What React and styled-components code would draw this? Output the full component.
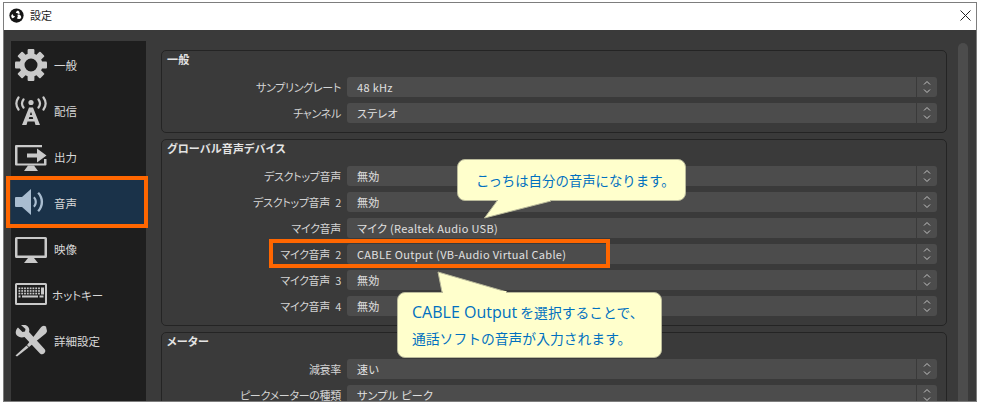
import React from 'react'
import styled, { createGlobalStyle } from 'styled-components'

const Global = createGlobalStyle`
  html, body { margin: 0; padding: 0; background: #fff; }
  body { font-family: "Noto Sans CJK JP", "Liberation Sans", sans-serif; overflow: hidden; }
`

const Page = styled.div`
  position: relative;
  width: 981px;
  height: 406px;
  padding: 2px 4px 4px 3px;
  box-sizing: border-box;
`

const Win = styled.div`
  height: 100%;
  border: 1px solid #7d7d7d;
  display: flex;
  flex-direction: column;
  overflow: hidden;
  box-sizing: border-box;
`

const TitleBar = styled.div`
  height: 27px;
  flex-shrink: 0;
  background: #fff;
  display: flex;
  align-items: center;
  padding: 0 5px 3px 5px;
  gap: 6px;
  box-sizing: border-box;
`

const TitleText = styled.div`
  font-size: 11px;
  color: #222;
  flex: 1;
`

const Body = styled.div`
  flex: 1;
  min-height: 0;
  background: #3a3a3a;
  display: flex;
  padding: 11px 8px 0 7px;
  overflow: hidden;
`

const Side = styled.div`
  width: 135px;
  flex-shrink: 0;
  background: #1e1e1e;
  padding-top: 1px;
`

const NavItem = styled.div`
  height: 46px;
  display: flex;
  align-items: center;
  gap: ${({ $tight }) => ($tight ? '5px' : '7px')};
  padding-left: 4px;
  background: ${({ $active }) => ($active ? '#1a3249' : 'transparent')};
  color: #d8d8d8;
  font-size: 11.5px;
  font-feature-settings: "palt";
`

const Content = styled.div`
  width: 786px;
  margin-left: 15px;
  flex-shrink: 0;
  padding-top: 9px;
  display: flex;
  flex-direction: column;
  gap: 6px;
`

const Scroll = styled.div`
  width: 10px;
  margin: 2px 0 0 11px;
  background: #4c4c4c;
  border-radius: 5px 5px 0 0;
  flex-shrink: 0;
`

const Group = styled.div`
  position: relative;
  border: 1px solid #242424;
  border-radius: 5px;
  padding: 26px 9px 9px 0;
  display: flex;
  flex-direction: column;
  gap: 6px;
  flex-shrink: 0;
`

const GroupTitle = styled.div`
  position: absolute;
  top: 0;
  left: 5px;
  font-size: 11px;
  line-height: 16px;
  font-weight: 700;
  letter-spacing: 0.2px;
  color: #e4e4e4;
  font-feature-settings: "palt";
`

const Row = styled.div`
  display: grid;
  grid-template-columns: 179px 1fr;
  column-gap: 6px;
  height: 20px;
  align-items: center;
`

const Label = styled.div`
  text-align: right;
  font-size: 11px;
  letter-spacing: -0.3px;
  word-spacing: 3px;
  color: #d4d4d4;
  white-space: nowrap;
  font-feature-settings: "palt";
`

const Combo = styled.div`
  height: 20px;
  background: #4c4c4c;
  border-radius: 3px;
  display: flex;
  align-items: center;
  color: #e0e0e0;
  font-size: 11px;
  letter-spacing: 0.32px;
  padding-left: 10px;
  font-feature-settings: "palt";
`

const ComboText = styled.div`
  flex: 1;
  white-space: nowrap;
`

const Spin = styled.div`
  width: 20px;
  height: 20px;
  border-left: 1px solid #3a3a3a;
  display: flex;
  align-items: center;
  justify-content: center;
`

const Highlight = styled.div`
  position: absolute;
  left: ${({ $x }) => $x}px;
  top: ${({ $y }) => $y}px;
  width: ${({ $w }) => $w}px;
  height: ${({ $h }) => $h}px;
  border: 4px solid #ff6600;
  box-sizing: border-box;
`

const Callout = styled.div`
  position: absolute;
  left: ${({ $x }) => $x}px;
  top: ${({ $y }) => $y}px;
  width: ${({ $w }) => $w}px;
  height: ${({ $h }) => $h}px;
  box-sizing: border-box;
  background: #ffffcc;
  border: 1px solid #b9b99a;
  border-radius: 8px;
  color: #0070c0;
  font-size: ${({ $size }) => $size}px;
  line-height: 26px;
  padding: ${({ $pad }) => $pad};
  white-space: nowrap;
`

const Latin = styled.span`
  font-family: "Open Sans", "Liberation Sans", sans-serif;
  font-size: 16px;
`

const Tail = styled.svg`
  position: absolute;
  left: ${({ $x }) => $x}px;
  top: ${({ $y }) => $y}px;
  overflow: visible;
`

const Ico = styled.svg`
  width: 32px;
  height: 32px;
  flex-shrink: 0;
  fill: ${({ $fill }) => $fill || '#c9c9c9'};
`

const ObsLogo = () => (
  <svg width="15" height="15" viewBox="0 0 16 16">
    <circle cx="8" cy="8" r="7.6" fill="#151515" />
    <path d="M9.5 2.6a3 3 0 0 1 1.4 4.3 3.4 3.4 0 0 0-3.6-1.5A3 3 0 0 1 9.5 2.6z" fill="#fff" />
    <path d="M13 10.3a3 3 0 0 1-4.6.6 3.4 3.4 0 0 0 .6-3.8 3 3 0 0 1 4 3.2z" fill="#fff" />
    <path d="M3.6 10.8a3 3 0 0 1 .1-4.5 3.4 3.4 0 0 0 2.8 2.6 3 3 0 0 1-2.9 1.9z" fill="#fff" />
  </svg>
)

const GearIcon = () => {
  const teeth = [0, 45, 90, 135, 180, 225, 270, 315]
  return (
    <Ico viewBox="0 0 32 32">
      {teeth.map((a) => (
        <rect key={a} x="12.6" y="0" width="6.8" height="8" rx="1" transform={`rotate(${a} 16 16)`} />
      ))}
      <path fillRule="evenodd" d="M16 4.5a11.5 11.5 0 1 1 0 23 11.5 11.5 0 0 1 0-23zm0 5a6.500 6.500 0 1 0 0 13 6.500 6.500 0 0 0 0-13z" />
    </Ico>
  )
}

const AntennaIcon = () => (
  <Ico viewBox="0 0 32 32">
    <circle cx="16" cy="7.500" r="2.6" />
    <path d="M3.500 2.500Q-.8 8.500 3.500 14.500M8.500 4.500Q5.500 8.500 8.500 12.500M28.500 2.500Q32.800 8.500 28.500 14.500M23.500 4.500Q26.500 8.500 23.500 12.500" fill="none" stroke="#c9c9c9" strokeWidth="2.200" strokeLinecap="round" />
    <path fillRule="evenodd" d="M14 12.500h4L25 30h-4.500l-1-3.500h-7l-1 3.500H7zm1 7.500h2l-.5-2.500h-1zm-1.200 4h4.400l-.5-2h-3.400z" />
  </Ico>
)

const OutputIcon = () => (
  <Ico viewBox="0 0 32 32">
    <path d="M1 4h26v2.200H2.500V22.500H29V18h2.500v5.500a1 1 0 0 1-1 1H1a1 1 0 0 1-1-1V5a1 1 0 0 1 1-1z" />
    <path d="M9 30l4-5.500h6l4 5.500z" />
    <path d="M12 12.500h10V7.500l9.500 7-9.500 7v-5H12z" />
  </Ico>
)

const SpeakerIcon = () => (
  <Ico viewBox="0 0 32 32" $fill="#a9bdd0">
    <path d="M1 10h6l9-8v26l-9-8H1a1 1 0 0 1-1-1v-8a1 1 0 0 1 1-1z" />
    <path d="M19.500 9.500c3.200 3 3.200 8 0 11l-1.300-1.600c2-2.200 2-5.600 0-7.800zM24 5c5.500 5.500 5.500 14.500 0 20l-1.700-1.500c4.500-4.500 4.500-12.500 0-17z" />
  </Ico>
)

const MonitorIcon = () => (
  <Ico viewBox="0 0 32 32">
    <path fillRule="evenodd" d="M1.500 4h29A1.500 1.500 0 0 1 32 5.500v18a1.500 1.500 0 0 1-1.500 1.500h-29A1.500 1.500 0 0 1 0 23.500v-18A1.500 1.500 0 0 1 1.500 4zM2.500 6v16.500h27V6z" />
    <path d="M9 30l4-5h6l4 5z" />
  </Ico>
)

const KeyboardIcon = () => {
  const keys = []
  for (let r = 0; r < 3; r++) {
    for (let c = 0; c < 8; c++) {
      keys.push(<rect key={`${r}-${c}`} x={3.5 + c * 2.8} y={8.5 + r * 2.6} width="1.8" height="1.7" />)
    }
  }
  return (
    <Ico viewBox="0 0 32 32">
      <path fillRule="evenodd" d="M1.500 4h29A1.500 1.500 0 0 1 32 5.500v19a1.500 1.500 0 0 1-1.500 1.500h-29A1.500 1.500 0 0 1 0 24.500v-19A1.500 1.500 0 0 1 1.500 4zM2 6v18h28V6z" />
      {keys}
      <rect x="26" y="8.500" width="3" height="7" />
      <rect x="7" y="16.500" width="16" height="2" />
      <rect x="3.500" y="16.500" width="2" height="2" />
      <rect x="24.500" y="16.500" width="4" height="2" />
    </Ico>
  )
}

const ToolsIcon = () => (
  <Ico viewBox="0 0 32 32">
    <path d="M3 2.500l4.500 4.500 2.500-.5.500-2.500L6 0c3.500-1 7 .5 8 3.500.4 1.200.4 2.500 0 3.500l15.500 17a3.200 3.200 0 0 1-4.500 4.500L9.500 12c-3 1-6 .3-8-2C0 8 .8 4.500 3 2.500z" />
    <path d="M31 1.500 32 6c0 1-1 2.500-2.500 3.500L14 22l-2-2L25 3.500C26 2 27.500 1 29 .8z" />
    <path d="M11.500 20.500l2 2L2 31.500l-1.500-1z" />
  </Ico>
)

const Chevrons = () => (
  <svg width="8" height="14" viewBox="0 0 8 14" fill="none" stroke="#c4c4c4" strokeWidth="1">
    <path d="M1 4.500 4 1.500 7 4.500" />
    <path d="M1 9.500 4 12.500 7 9.500" />
  </svg>
)

const CloseIcon = () => (
  <svg width="11" height="11" viewBox="0 0 11 11" stroke="#222" strokeWidth="1" fill="none">
    <path d="M.5.500l10 10M10.500.500l-10 10" />
  </svg>
)

const navItems = [
  { label: '一般', icon: <GearIcon /> },
  { label: '配信', icon: <AntennaIcon /> },
  { label: '出力', icon: <OutputIcon /> },
  { label: '音声', icon: <SpeakerIcon />, active: true },
  { label: '映像', icon: <MonitorIcon /> },
  { label: 'ホットキー', icon: <KeyboardIcon />, tight: true },
  { label: '詳細設定', icon: <ToolsIcon /> },
]

const groups = [
  {
    title: '一般',
    rows: [
      ['サンプリングレート', '48 kHz'],
      ['チャンネル', 'ステレオ'],
    ],
  },
  {
    title: 'グローバル音声デバイス',
    rows: [
      ['デスクトップ音声', '無効'],
      ['デスクトップ音声 2', '無効'],
      ['マイク音声', 'マイク (Realtek Audio USB)'],
      ['マイク音声 2', 'CABLE Output (VB-Audio Virtual Cable)'],
      ['マイク音声 3', '無効'],
      ['マイク音声 4', '無効'],
    ],
  },
  {
    title: 'メーター',
    rows: [
      ['減衰率', '速い'],
      ['ピークメーターの種類', 'サンプル ピーク'],
    ],
  },
]

export default function App() {
  return (
    <Page>
      <Global />
      <Win>
        <TitleBar>
          <ObsLogo />
          <TitleText>設定</TitleText>
          <CloseIcon />
        </TitleBar>
        <Body>
          <Side>
            {navItems.map((n) => (
              <NavItem key={n.label} $active={n.active} $tight={n.tight}>
                {n.icon}
                {n.label}
              </NavItem>
            ))}
          </Side>
          <Content>
            {groups.map((g) => (
              <Group key={g.title}>
                <GroupTitle>{g.title}</GroupTitle>
                {g.rows.map(([label, value]) => (
                  <Row key={label}>
                    <Label>{label}</Label>
                    <Combo>
                      <ComboText>{value}</ComboText>
                      <Spin><Chevrons /></Spin>
                    </Combo>
                  </Row>
                ))}
              </Group>
            ))}
          </Content>
          <Scroll />
        </Body>
      </Win>

      <Highlight $x={6} $y={176} $w={142} $h={52} />
      <Highlight $x={269} $y={239} $w={341} $h={29} />

      <Callout $x={457} $y={159} $w={229} $h={42} $size={13.4} $pad="7px 0 0 18px">こっちは自分の音声になります。</Callout>
      <Tail $x={484} $y={199} width="70" height="20">
        <path d="M13 2 L0.500 19 L67 2" fill="#ffffcc" stroke="#b9b99a" />
        <rect x="14" y="0" width="52" height="2" fill="#ffffcc" />
      </Tail>

      <Callout $x={397} $y={292} $w={265} $h={66} $size={13.8} $pad="6px 0 0 14px">
        <Latin>CABLE Output</Latin> を選択することで、
        <br />
        通話ソフトの音声が入力されます。
      </Callout>
      <Tail $x={437} $y={271} width="72" height="23">
        <path d="M1 1 L5 21 L70 21 Z" fill="#ffffcc" stroke="#b9b99a" />
        <rect x="6" y="20" width="63" height="3" fill="#ffffcc" />
      </Tail>
    </Page>
  )
}
